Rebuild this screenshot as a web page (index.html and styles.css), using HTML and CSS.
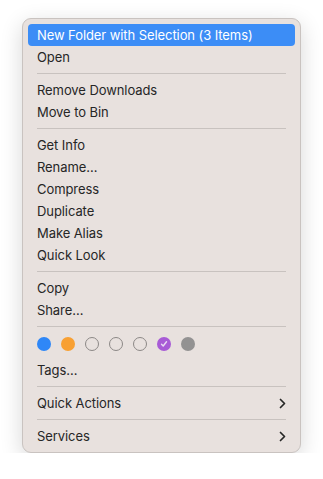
FILE: index.html
```html
<!DOCTYPE html>
<html lang="en">
  <head>
    <meta charset="UTF-8" />
    <meta name="viewport" content="width=device-width, initial-scale=1.0" />
    <title>Context Menu</title>
    <link rel="stylesheet" href="styles.css">
  </head>
  <body>
    <div class="menu">
      <div class="item active">New Folder with Selection (3 Items)</div>
      <div class="item">Open</div>
      <div class="sep"></div>
      <div class="item">Remove Downloads</div>
      <div class="item">Move to Bin</div>
      <div class="sep"></div>
      <div class="item">Get Info</div>
      <div class="item">Rename…</div>
      <div class="item">Compress</div>
      <div class="item">Duplicate</div>
      <div class="item">Make Alias</div>
      <div class="item">Quick Look</div>
      <div class="sep"></div>
      <div class="item">Copy</div>
      <div class="item">Share…</div>
      <div class="sep"></div>
      <div class="tags">
        <span class="dot blue"></span>
        <span class="dot orange"></span>
        <span class="dot empty"></span>
        <span class="dot empty"></span>
        <span class="dot empty"></span>
        <span class="dot purple">
          <svg width="8" height="8" viewBox="0 0 8 8"><path d="M1.5 4.3 L3.2 6 L6.5 1.8" fill="none" stroke="#e9dcf2" stroke-width="1.4" stroke-linecap="round" stroke-linejoin="round"/></svg>
        </span>
        <span class="dot grey"></span>
      </div>
      <div class="item">Tags…</div>
      <div class="sep"></div>
      <div class="item sub">Quick Actions
        <svg class="chev" width="7" height="11" viewBox="0 0 7 11"><path d="M1.5 1.5 L5.5 5.5 L1.5 9.5" fill="none" stroke="#262626" stroke-width="1.7" stroke-linecap="round" stroke-linejoin="round"/></svg>
      </div>
      <div class="sep"></div>
      <div class="item sub">Services
        <svg class="chev" width="7" height="11" viewBox="0 0 7 11"><path d="M1.5 1.5 L5.5 5.5 L1.5 9.5" fill="none" stroke="#262626" stroke-width="1.7" stroke-linecap="round" stroke-linejoin="round"/></svg>
      </div>
    </div>
  </body>
</html>
```

FILE: styles.css
```css
body {
  margin: 0;
  background-color: #fff;
  font-family: Inter, "Liberation Sans", sans-serif;
}
.menu {
  margin: 18px 0 0 22px;
  width: 277px;
  padding: 5px 0;
  background-color: #e8e1de;
  border: 1px solid #c9c3c0;
  border-radius: 9px;
  box-shadow: 0 6px 22px rgba(0, 0, 0, 0.16);
}
.item {
  display: flex;
  align-items: center;
  justify-content: space-between;
  height: 22px;
  margin: 0 5px;
  padding: 0 9px 0 9px;
  border-radius: 4px;
  font-size: 13px;
  letter-spacing: -0.08px;
  color: #262626;
}
.item.active {
  background-color: #3c8df6;
  color: #fff;
}
.sep {
  height: 1px;
  margin: 5px 14px;
  background-color: #c8c2bf;
}
.tags {
  display: flex;
  gap: 10px;
  padding: 5px 0 0 14px;
  height: 22px;
  align-items: flex-start;
}
.dot {
  width: 14px;
  height: 14px;
  border-radius: 50%;
  box-sizing: border-box;
  display: flex;
  align-items: center;
  justify-content: center;
}
.blue { background-color: #2f87f7; }
.orange { background-color: #f8a033; }
.empty { border: 1px solid #8c8886; }
.purple { background-color: #a85bd6; }
.grey { background-color: #939292; }
```
